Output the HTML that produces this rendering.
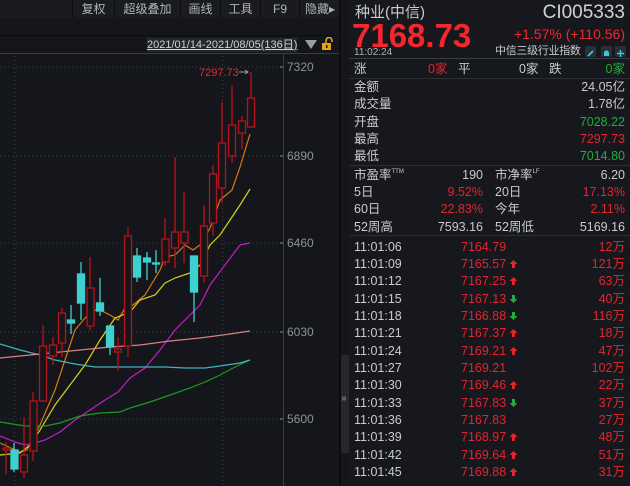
<!DOCTYPE html>
<html><head><meta charset="utf-8">
<style>
*{margin:0;padding:0;box-sizing:border-box}
body{width:630px;height:486px;background:#14161b;overflow:hidden;position:relative;font-family:"Liberation Sans","Noto Sans CJK SC",sans-serif;color:#c8cacd}
.abs{position:absolute;white-space:nowrap}
#tb{position:absolute;left:0;top:0;width:340px;height:18px;background:#191b20}
.btn{position:absolute;top:0;height:18px;font-size:12px;line-height:18px;color:#b0b3b8;text-align:center;border-left:1px solid #0b0c0e}
#rp{position:absolute;left:349px;top:0;width:281px;height:486px;background:#16181d}
.r{position:absolute;font-size:12.5px;line-height:14px;white-space:nowrap}
.red{color:#e0262e}.grn{color:#1fae3c}.wht{color:#c9cbce}
.hl{position:absolute;left:0;width:281px;height:1px;background:#2c2f35}
.ic{position:absolute;top:46px;width:11px;height:11px;background:#2a2e35;border-radius:1px}
.sp{font-size:6px;vertical-align:top;line-height:8px}
.up,.dn{display:inline-block;width:9px;height:10px;margin-left:3px;vertical-align:-1px}
</style></head><body>
<div id="tb">
 <div class="btn" style="left:72px;width:42px">复权</div>
 <div class="btn" style="left:114px;width:66px">超级叠加</div>
 <div class="btn" style="left:180px;width:40px">画线</div>
 <div class="btn" style="left:220px;width:40px">工具</div>
 <div class="btn" style="left:260px;width:39px">F9</div>
 <div class="btn" style="left:299px;width:41px">隐藏▸</div>
</div>
<div class="abs" style="left:0;top:35px;width:340px;height:1px;background:#0b0c0e"></div>
<div class="abs" style="left:147px;top:38px;font-size:11px;color:#d0d2d5;text-decoration:underline;background:#24272c;line-height:14px">2021/01/14-2021/08/05(136日)</div>
<div class="abs" style="left:305px;top:40px;width:0;height:0;border-left:6px solid transparent;border-right:6px solid transparent;border-top:9px solid #9a9da2"></div>
<svg class="abs" style="left:321px;top:37px" width="12" height="14" viewBox="0 0 12 14"><path d="M5 6V3.5a3 3 0 0 1 6 0V5" fill="none" stroke="#e3a21a" stroke-width="1.6"/><rect x="1" y="6" width="9" height="7" fill="#e3a21a"/><rect x="5" y="8" width="1.5" height="3" fill="#14161b"/></svg>
<div class="abs" style="left:0;top:53px;width:340px;height:1px;background:#3a3d42"></div>

<svg class="abs" style="left:0;top:54px" width="340" height="432" viewBox="0 54 340 432">
<g stroke="#3a3d44" stroke-dasharray="1,3" stroke-width="1">
<line x1="0" y1="67" x2="283" y2="67"/><line x1="0" y1="156" x2="283" y2="156"/><line x1="0" y1="243" x2="283" y2="243"/><line x1="0" y1="332" x2="283" y2="332"/><line x1="0" y1="419" x2="283" y2="419"/>
<line x1="14.5" y1="56" x2="14.5" y2="486"/><line x1="222.5" y1="56" x2="222.5" y2="486"/>
</g>
<line x1="283.5" y1="54" x2="283.5" y2="486" stroke="#3a3d42"/>
<g fill="#8e9196" font-size="12" font-family="Liberation Sans,sans-serif">
<text x="287" y="71">7320</text><text x="287" y="160">6890</text><text x="287" y="247">6460</text><text x="287" y="336">6030</text><text x="287" y="423">5600</text>
</g>
<g stroke="#8e9196"><line x1="280" y1="67" x2="283" y2="67"/><line x1="280" y1="156" x2="283" y2="156"/><line x1="280" y1="243" x2="283" y2="243"/><line x1="280" y1="332" x2="283" y2="332"/><line x1="280" y1="419" x2="283" y2="419"/></g>
<text x="199" y="76" fill="#e02a33" font-size="11" font-family="Liberation Sans,sans-serif">7297.73</text>
<path d="M239 72H248M245 70L248 72L245 74" stroke="#9a9da2" fill="none"/>
<g fill="none" stroke-width="1.2">
<polyline stroke="#d87a12" points="0,443 20,452 27,450 40,425 55,390 65,360 75,330 85,318 95,310 100,310 110,315 118,320 125,308 133,305 145,295 160,270 165,257 175,255 185,245 193,250 200,245 210,228 220,200 232,190 240,167 250,134"/>
<polyline stroke="#d8d21a" points="0,455 20,453 30,445 40,430 55,405 70,385 85,365 100,340 115,318 130,312 140,300 155,295 165,283 175,278 190,273 200,265 210,245 220,235 230,220 240,205 250,189"/>
<polyline stroke="#c21fc4" points="0,436 15,442 25,445 35,443 45,440 60,432 75,420 90,410 105,400 118,392 130,378 145,368 160,350 175,330 190,315 200,305 210,285 225,265 240,245 250,243"/>
<polyline stroke="#1c9a1c" points="0,422 25,426 45,426 60,423 80,416 100,413 120,412 130,408 150,402 170,395 190,388 205,382 220,375 235,367 250,360"/>
<polyline stroke="#3fb3c0" points="0,344 20,350 40,355 55,360 75,364 95,367 115,367 140,367 165,367 185,368 205,368 220,366 240,363 250,360"/>
<polyline stroke="#d98080" points="0,358 20,356 50,353 80,350 110,347 140,345 170,341 200,338 230,334 250,331"/>
</g>
<g stroke="#b8121a" stroke-width="1.3" fill="#14161b">
<line x1="6" y1="442" x2="6" y2="474"/><rect x="3" y="448" width="7" height="2"/>
<line x1="24" y1="417" x2="24" y2="478"/><rect x="20.5" y="455" width="7" height="17"/>
<line x1="33" y1="392" x2="33" y2="461"/><rect x="30" y="401" width="7" height="50"/>
<line x1="43" y1="325" x2="43" y2="401"/><rect x="39.5" y="346" width="7" height="55"/>
<line x1="53" y1="337" x2="53" y2="365"/><rect x="49.5" y="345" width="7" height="11"/>
<line x1="62" y1="308" x2="62" y2="357"/><rect x="58.5" y="313" width="7" height="30"/>
<line x1="90" y1="257" x2="90" y2="330"/><rect x="87" y="288" width="7" height="38"/>
<line x1="118" y1="337" x2="118" y2="371"/><rect x="114.5" y="349" width="7" height="3"/>
<line x1="128" y1="227" x2="128" y2="357"/><rect x="124.5" y="236" width="7" height="110"/>
<line x1="165" y1="218" x2="165" y2="266"/><rect x="162" y="239" width="7" height="23"/>
<line x1="175" y1="157" x2="175" y2="268"/><rect x="171.5" y="232" width="7" height="16"/>
<line x1="184" y1="192" x2="184" y2="263"/><rect x="181" y="232" width="7" height="11"/>
<line x1="204" y1="205" x2="204" y2="283"/><rect x="200.5" y="226" width="7" height="50"/>
<line x1="213" y1="165" x2="213" y2="236"/><rect x="209.5" y="174" width="7" height="49"/>
<line x1="222" y1="102" x2="222" y2="203"/><rect x="218.5" y="143" width="7" height="45"/>
<line x1="232" y1="85" x2="232" y2="163"/><rect x="228.5" y="125" width="7" height="31"/>
<line x1="242" y1="116" x2="242" y2="149"/><rect x="238.5" y="121" width="7" height="12"/>
<line x1="251" y1="72" x2="251" y2="127"/><rect x="247.5" y="98" width="7" height="29"/>
</g>
<g stroke="#3ecfd0" stroke-width="1.3" fill="#3ecfd0">
<line x1="14" y1="443" x2="14" y2="472"/><rect x="11" y="450" width="7" height="19"/>
<line x1="71" y1="305" x2="71" y2="334"/><rect x="67.5" y="320" width="7" height="3"/>
<line x1="81" y1="262" x2="81" y2="320"/><rect x="77.5" y="274" width="7" height="29"/>
<line x1="100" y1="278" x2="100" y2="316"/><rect x="96.5" y="303" width="7" height="8"/>
<line x1="110" y1="326" x2="110" y2="355"/><rect x="106.5" y="326" width="7" height="21"/>
<line x1="137" y1="248" x2="137" y2="282"/><rect x="133.5" y="256" width="7" height="21"/>
<line x1="147" y1="252" x2="147" y2="280"/><rect x="143.5" y="258" width="7" height="4"/>
<line x1="156" y1="250" x2="156" y2="273"/><rect x="152.5" y="263" width="7" height="1"/>
<line x1="194" y1="256" x2="194" y2="322"/><rect x="190.5" y="256" width="7" height="36"/>
</g>
</svg>

<div class="abs" style="left:339px;top:0;width:2px;height:486px;background:#0b0c0e"></div>
<div class="abs" style="left:341px;top:355px;width:8px;height:98px;background:#26282d;border-radius:2px 0 0 2px"></div>
<div class="abs" style="left:341px;top:393px;font-size:10px;color:#a0a3a8">»</div>

<div id="rp">
 <div class="r wht" style="left:6px;top:4px;font-size:15px;line-height:18px">种业(中信)</div>
 <div class="r" style="right:5px;top:2px;font-size:19px;line-height:22px;color:#d0d2d5">CI005333</div>
 <div class="r" style="left:3px;top:19px;font-size:33px;line-height:34px;font-weight:bold;color:#f5262c">7168.73</div>
 <div class="r" style="right:5px;top:26px;font-size:14px;line-height:16px;color:#f5262c">+1.57% (+110.56)</div>
 <div class="r" style="left:5px;top:47px;font-size:10px;line-height:12px;color:#b0b3b8">11:02:24</div>
 <div class="r wht" style="left:146px;top:45px;font-size:11px;line-height:13px;letter-spacing:-0.3px">中信三级行业指数</div>
 <div class="ic" style="left:236px"><svg width="11" height="11"><path d="M3 8L8 3" stroke="#3ec4e0" stroke-width="1.8"/></svg></div>
 <div class="ic" style="left:252px"><svg width="11" height="11"><path d="M3 8V5a2.5 2.5 0 0 1 5 0V8Z" fill="#3ec4e0"/></svg></div>
 <div class="ic" style="left:266px"><svg width="11" height="11"><path d="M5.5 2V9M2 5.5H9" stroke="#3ec4e0" stroke-width="1.5"/></svg></div>
 <div class="hl" style="top:58px;background:#3a3d42"></div>
 <div class="r wht" style="left:5px;top:62px">涨</div>
 <div class="r red" style="left:79px;top:62px">0家</div>
 <div class="r wht" style="left:109px;top:62px">平</div>
 <div class="r wht" style="left:170px;top:62px">0家</div>
 <div class="r wht" style="left:200px;top:62px">跌</div>
 <div class="r grn" style="right:5px;top:62px">0家</div>
 <div class="hl" style="top:78px"></div>
 <div class="r wht" style="left:5px;top:80px">金额</div><div class="r wht" style="right:5px;top:80px">24.05亿</div>
 <div class="r wht" style="left:5px;top:97px">成交量</div><div class="r wht" style="right:5px;top:97px">1.78亿</div>
 <div class="r wht" style="left:5px;top:115px">开盘</div><div class="r grn" style="right:5px;top:115px">7028.22</div>
 <div class="r wht" style="left:5px;top:132px">最高</div><div class="r red" style="right:5px;top:132px">7297.73</div>
 <div class="r wht" style="left:5px;top:149px">最低</div><div class="r grn" style="right:5px;top:149px">7014.80</div>
 <div class="hl" style="top:165px"></div>
 <div class="r wht" style="left:5px;top:168px">市盈率<span class="sp">TTM</span></div><div class="r wht" style="right:147px;top:168px">190</div>
 <div class="r wht" style="left:146px;top:168px">市净率<span class="sp">LF</span></div><div class="r wht" style="right:5px;top:168px">6.20</div>
 <div class="r wht" style="left:5px;top:185px">5日</div><div class="r red" style="right:147px;top:185px">9.52%</div>
 <div class="r wht" style="left:146px;top:185px">20日</div><div class="r red" style="right:5px;top:185px">17.13%</div>
 <div class="r wht" style="left:5px;top:202px">60日</div><div class="r red" style="right:147px;top:202px">22.83%</div>
 <div class="r wht" style="left:146px;top:202px">今年</div><div class="r red" style="right:5px;top:202px">2.11%</div>
 <div class="r wht" style="left:5px;top:220px">52周高</div><div class="r wht" style="right:147px;top:220px">7593.16</div>
 <div class="r wht" style="left:146px;top:220px">52周低</div><div class="r wht" style="right:5px;top:220px">5169.16</div>
 <div class="hl" style="top:235px"></div>
</div>
<svg width="0" height="0" style="position:absolute"><defs>
<symbol id="au" viewBox="0 0 9 10"><path d="M4.5 1L8.5 5H6V9H3V5H0.5Z" fill="#e0262e"/></symbol>
<symbol id="ad" viewBox="0 0 9 10"><path d="M4.5 9L8.5 5H6V1H3V5H0.5Z" fill="#1fae3c"/></symbol>
</defs></svg>
<div class="r wht" style="left:354px;top:240px">11:01:06</div><div class="r red" style="left:461px;top:240px">7164.79</div><div class="r red" style="right:5px;top:240px">12万</div>
<div class="r wht" style="left:354px;top:257px">11:01:09</div><div class="r red" style="left:461px;top:257px">7165.57<svg class="up"><use href="#au"/></svg></div><div class="r red" style="right:5px;top:257px">121万</div>
<div class="r wht" style="left:354px;top:274px">11:01:12</div><div class="r red" style="left:461px;top:274px">7167.25<svg class="up"><use href="#au"/></svg></div><div class="r red" style="right:5px;top:274px">63万</div>
<div class="r wht" style="left:354px;top:292px">11:01:15</div><div class="r red" style="left:461px;top:292px">7167.13<svg class="dn"><use href="#ad"/></svg></div><div class="r red" style="right:5px;top:292px">40万</div>
<div class="r wht" style="left:354px;top:309px">11:01:18</div><div class="r red" style="left:461px;top:309px">7166.88<svg class="dn"><use href="#ad"/></svg></div><div class="r red" style="right:5px;top:309px">116万</div>
<div class="r wht" style="left:354px;top:326px">11:01:21</div><div class="r red" style="left:461px;top:326px">7167.37<svg class="up"><use href="#au"/></svg></div><div class="r red" style="right:5px;top:326px">18万</div>
<div class="r wht" style="left:354px;top:344px">11:01:24</div><div class="r red" style="left:461px;top:344px">7169.21<svg class="up"><use href="#au"/></svg></div><div class="r red" style="right:5px;top:344px">47万</div>
<div class="r wht" style="left:354px;top:361px">11:01:27</div><div class="r red" style="left:461px;top:361px">7169.21</div><div class="r red" style="right:5px;top:361px">102万</div>
<div class="r wht" style="left:354px;top:378px">11:01:30</div><div class="r red" style="left:461px;top:378px">7169.46<svg class="up"><use href="#au"/></svg></div><div class="r red" style="right:5px;top:378px">22万</div>
<div class="r wht" style="left:354px;top:396px">11:01:33</div><div class="r red" style="left:461px;top:396px">7167.83<svg class="dn"><use href="#ad"/></svg></div><div class="r red" style="right:5px;top:396px">37万</div>
<div class="r wht" style="left:354px;top:413px">11:01:36</div><div class="r red" style="left:461px;top:413px">7167.83</div><div class="r red" style="right:5px;top:413px">27万</div>
<div class="r wht" style="left:354px;top:430px">11:01:39</div><div class="r red" style="left:461px;top:430px">7168.97<svg class="up"><use href="#au"/></svg></div><div class="r red" style="right:5px;top:430px">48万</div>
<div class="r wht" style="left:354px;top:448px">11:01:42</div><div class="r red" style="left:461px;top:448px">7169.64<svg class="up"><use href="#au"/></svg></div><div class="r red" style="right:5px;top:448px">51万</div>
<div class="r wht" style="left:354px;top:465px">11:01:45</div><div class="r red" style="left:461px;top:465px">7169.88<svg class="up"><use href="#au"/></svg></div><div class="r red" style="right:5px;top:465px">31万</div>
</body></html>
